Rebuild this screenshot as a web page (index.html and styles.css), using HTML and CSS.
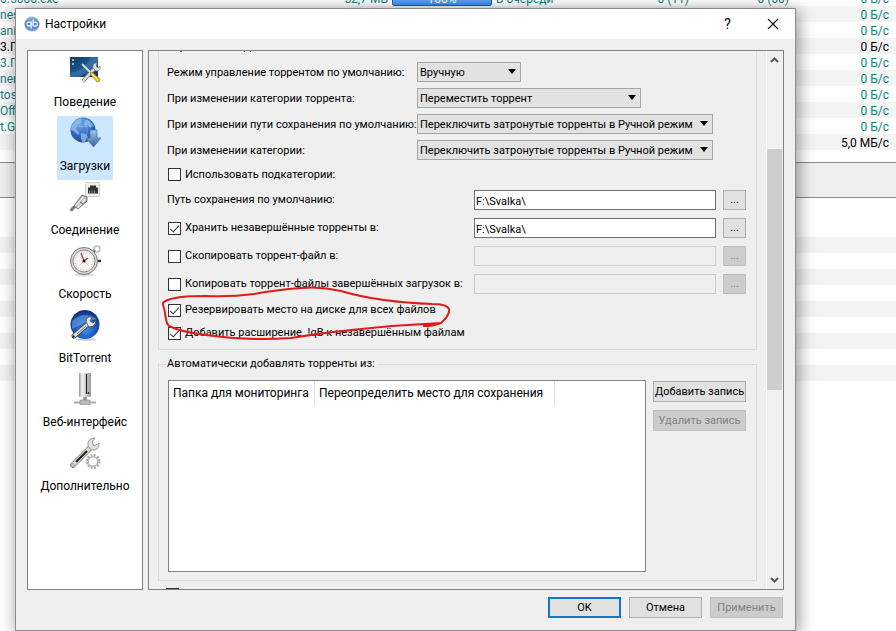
FILE: index.html
```html
<!DOCTYPE html>
<html lang="ru">
<head>
<meta charset="utf-8">
<title>Настройки</title>
<link rel="stylesheet" href="styles.css">
</head>
<body>
<main class="desktop">
  <section class="app" aria-label="Список торрентов">
    <table class="torrents">
      <colgroup><col class="c-name"><col class="c-size"><col class="c-done"><col class="c-state"><col class="c-num"><col class="c-num"><col></colgroup>
      <tbody>
        <tr><td>0.5000.exe</td><td class="num size">52,7 МБ</td><td><div class="bar">100%</div></td><td>В очереди</td><td class="num">0 (11)</td><td class="num">0 (60)</td><td class="num">0 Б/с</td></tr>
        <tr><td colspan="6">nes</td><td class="num">0 Б/с</td></tr>
        <tr><td colspan="6">ani</td><td class="num">0 Б/с</td></tr>
        <tr class="active"><td colspan="6">3.П</td><td class="num">0 Б/с</td></tr>
        <tr><td colspan="6">3.П</td><td class="num">0 Б/с</td></tr>
        <tr><td colspan="6">nem</td><td class="num">0 Б/с</td></tr>
        <tr><td colspan="6">tos</td><td class="num">0 Б/с</td></tr>
        <tr><td colspan="6">Offi</td><td class="num">0 Б/с</td></tr>
        <tr><td colspan="6">t.G.</td><td class="num">0 Б/с</td></tr>
        <tr class="active"><td colspan="6"></td><td class="num">5,0 МБ/с</td></tr>
      </tbody>
    </table>
    <div class="splitter"></div>
    <div class="stripes"></div>
  </section>

  <section class="dialog" role="dialog" aria-labelledby="dlg-title">
    <header class="titlebar">
      <svg class="logo" viewBox="0 0 16 16" aria-hidden="true">
        <defs><linearGradient id="lg" x1="0" y1="0" x2="0" y2="1"><stop offset="0" stop-color="#9db9dd"/><stop offset=".5" stop-color="#4a78bd"/><stop offset="1" stop-color="#7da4dc"/></linearGradient></defs>
        <circle cx="8" cy="8" r="7.5" fill="url(#lg)"/>
        <g fill="none" stroke="#e8f1fc" stroke-width="1.3"><circle cx="5" cy="8" r="2"/><path d="M7.2 5.5v7M9.2 3.5v6.7"/><circle cx="11.2" cy="8.2" r="2"/></g>
      </svg>
      <h1 id="dlg-title">Настройки</h1>
      <button class="tb" type="button" aria-label="Справка">?</button>
      <button class="tb" type="button" aria-label="Закрыть"><svg viewBox="0 0 12 12" width="12" height="12"><path d="M1 1l10 10M11 1L1 11" stroke="#111" stroke-width="1.1"/></svg></button>
    </header>

    <div class="body">
      <nav class="sidebar" aria-label="Разделы">
        <button type="button" class="item">
          <svg viewBox="0 0 32 32"><defs><linearGradient id="scr" x1="0" y1="0" x2="1" y2="1"><stop offset="0" stop-color="#123c63"/><stop offset=".55" stop-color="#1c5790"/><stop offset="1" stop-color="#0e2f57"/></linearGradient></defs>
          <rect x="1" y="4" width="28" height="20" fill="url(#scr)"/><path d="M1 20Q15 18 22 4h7v8Q20 20 9 24H1z" fill="#4d8fc4" opacity=".4"/><path d="M3 7h2M3 11h2" stroke="#b9dcf5" stroke-width="1.5"/>
          <path d="M14 28L27 14" stroke="#777" stroke-width="4"/><path d="M14 28L27 14" stroke="#ddd" stroke-width="2.4"/><path d="M24 15q-1-5 4-5l-1 3 2 2 2-2q1 5-4 5z" fill="#ddd" stroke="#777" stroke-width=".7"/>
          <path d="M13 11l10 10" stroke="#ddd" stroke-width="1.8"/><path d="M21 19l3 1 7 6q0 3-3 3l-6-7z" fill="#efc52a" stroke="#9d7a13" stroke-width=".7"/><path d="M23 21l6 6" stroke="#fff0a0"/></svg>
          <span>Поведение</span></button>
        <button type="button" class="item selected" aria-current="true">
          <svg viewBox="0 0 32 32"><defs><radialGradient id="globe" cx=".4" cy=".3" r=".75"><stop offset="0" stop-color="#6fa9e8"/><stop offset=".6" stop-color="#2e68bd"/><stop offset="1" stop-color="#1c428d"/></radialGradient><linearGradient id="arr" x2="0" y2="1"><stop offset="0" stop-color="#a6c4e8"/><stop offset="1" stop-color="#2f62a5"/></linearGradient></defs>
          <circle cx="14" cy="13" r="12.500" fill="url(#globe)"/><path d="M5 5Q9 1 13 2l-1 4-4 2-1 4 3 3-1 3-4-4-3-1q0-5 3-8zM17 2q5 2 7 6l-3 3-2-3-3 1-1-3zM12 16l5 1 2 3-3 5h-3l-1-4z" fill="#a9cdf3" opacity=".65"/><path d="M3 8q10 3 22 1M14 1q8 11 1 24" fill="none" stroke="#8ebaf0" stroke-width=".6"/>
          <path d="M21 13h7v8h4L24.500 30 17 21h4z" fill="url(#arr)" stroke="#4c78b1" stroke-width=".8"/></svg>
          <span>Загрузки</span></button>
        <button type="button" class="item">
          <svg viewBox="0 0 32 32"><rect x="16.500" y="1.500" width="14" height="14" rx="1" fill="#eee" stroke="#ccc"/><path d="M19 12.500V6.500h2V4.500h6v2h2v6z" fill="#333"/><path d="M20.500 12.500v-3M23 12.500v-3M25.500 12.500v-3" stroke="#aaa" stroke-width=".8"/><path d="M7 25q-4 2-5 5" stroke="#777" stroke-width="3" fill="none"/><path d="M5 25L13 14l5 2v4L9 28z" fill="#b7b7b7" stroke="#777"/><path d="M6.500 25l8-9M8.500 27l8-9" stroke="#f2f2f2" stroke-width="1.4"/><path d="M11 21l3 2" stroke="#555"/></svg>
          <span>Соединение</span></button>
        <button type="button" class="item">
          <svg viewBox="0 0 32 32"><ellipse cx="16" cy="30" rx="11" ry="1.500" fill="#ddd"/><circle cx="28" cy="4" r="3" fill="none" stroke="#bbb" stroke-width="1.400"/><path d="M24 7l2-2" stroke="#888" stroke-width="3"/><path d="M29 16h3" stroke="#333" stroke-width="2.500"/><circle cx="15" cy="16" r="13.500" fill="#d9d9d9" stroke="#777"/><circle cx="15" cy="16" r="11" fill="#f8f5f4" stroke="#888"/><circle cx="15" cy="16" r="9" fill="none" stroke="#aaa" stroke-dasharray=".8 2"/><path d="M15 16L12 8M15 16l4-3" stroke="#a33" stroke-width="1.200"/><path d="M15 16l-5 5M15 16l5 5" stroke="#ecc" stroke-width="1"/><circle cx="15" cy="16" r="1.500" fill="#400"/></svg>
          <span>Скорость</span></button>
        <button type="button" class="item">
          <svg viewBox="0 0 32 32"><defs><radialGradient id="bt" cx=".5" cy=".65" r=".6"><stop offset="0" stop-color="#449bea"/><stop offset=".6" stop-color="#1b57bd"/><stop offset="1" stop-color="#123581"/></radialGradient></defs><ellipse cx="17" cy="30.500" rx="10" ry="1.300" fill="#ccd"/><circle cx="16" cy="15.500" r="14.500" fill="url(#bt)"/><path d="M3 12Q14 1 28 10 18 12 3 20z" fill="#7fb0ee" opacity=".5"/><path d="M5 27L20 14" stroke="#444" stroke-width="5" stroke-linecap="round"/><path d="M5 27L20 14" stroke="#ddd" stroke-width="3.400" stroke-linecap="round"/><path d="M8 25L17 17" stroke="#777" stroke-width="1"/><path d="M17 13q0-6 6-5l-2 4 3 2 3-3q0 7-7 7z" fill="#e5e5e5" stroke="#444" stroke-width=".8"/><circle cx="4.500" cy="27.500" r="1.200" fill="#333"/></svg>
          <span>BitTorrent</span></button>
        <button type="button" class="item">
          <svg viewBox="0 0 32 32"><defs><linearGradient id="srv"><stop offset="0" stop-color="#999"/><stop offset=".25" stop-color="#f2f2f2"/><stop offset=".55" stop-color="#d5d5d5"/><stop offset="1" stop-color="#999"/></linearGradient></defs><rect x="10" width="12" height="24" fill="url(#srv)"/><path d="M17.500 1v20" stroke="#222" stroke-width="1.200"/><circle cx="19.500" cy="20" r="1" fill="#333"/><path d="M14 24h4v3h-4z" fill="#999"/><path d="M5 29.500h22" stroke="#aaa" stroke-width="2"/><rect x="11" y="27" width="10" height="5" fill="#bbb" stroke="#888" stroke-width=".6"/></svg>
          <span>Веб-интерфейс</span></button>
        <button type="button" class="item">
          <svg viewBox="0 0 32 32"><circle cx="24" cy="24.500" r="6" fill="none" stroke="#abaebb" stroke-width="3" stroke-dasharray="1.900 1.240"/><circle cx="24" cy="24.500" r="4.800" fill="#fff" stroke="#b5b8c4" stroke-width="1.500"/><path d="M4 28L22 10" stroke="#777" stroke-width="5.500" stroke-linecap="round"/><path d="M4 28L22 10" stroke="#ddd" stroke-width="4" stroke-linecap="round"/><path d="M7 25L18 14" stroke="#222" stroke-width="2.200"/><path d="M19 9q-1-8 7-8l-3 4 2 4 5-3q1 8-8 7z" fill="#e0e0e0" stroke="#888" stroke-width=".8"/><circle cx="4" cy="28" r="1.300" fill="#fff" stroke="#555" stroke-width=".6"/></svg>
          <span>Дополнительно</span></button>
      </nav>

      <div class="panel">
        <form class="view">
          <div class="group first">
            <div class="heading">Управление торрентами</div>
            <div class="row"><label class="lab" for="s1">Режим управление торрентом по умолчанию:</label><span class="combo w1"><select id="s1"><option>Вручную</option></select></span></div>
            <div class="row"><label class="lab" for="s2">При изменении категории торрента:</label><span class="combo w2"><select id="s2"><option>Переместить торрент</option></select></span></div>
            <div class="row"><label class="lab" for="s3">При изменении пути сохранения по умолчанию:</label><span class="combo w3"><select id="s3"><option>Переключить затронутые торренты в Ручной режим</option></select></span></div>
            <div class="row"><label class="lab" for="s4">При изменении категории:</label><span class="combo w3"><select id="s4"><option>Переключить затронутые торренты в Ручной режим</option></select></span></div>
            <label class="check sub"><input type="checkbox">Использовать подкатегории:</label>
            <div class="path"><label for="p1">Путь сохранения по умолчанию:</label><input class="text" id="p1" type="text" value="F:\Svalka\"><button type="button" class="btn" aria-label="Обзор">...</button></div>
            <div class="path"><label class="check"><input type="checkbox" checked>Хранить незавершённые торренты в:</label><input class="text" type="text" value="F:\Svalka\" aria-label="Папка незавершённых торрентов"><button type="button" class="btn" aria-label="Обзор">...</button></div>
            <div class="path"><label class="check"><input type="checkbox">Скопировать торрент-файл в:</label><input class="text" type="text" disabled aria-label="Папка торрент-файлов"><button type="button" class="btn" disabled aria-label="Обзор">...</button></div>
            <div class="path"><label class="check"><input type="checkbox">Копировать торрент-файлы завершённых загрузок в:</label><input class="text" type="text" disabled aria-label="Папка файлов завершённых загрузок"><button type="button" class="btn" disabled aria-label="Обзор">...</button></div>
            <label class="check solo"><input type="checkbox" checked>Резервировать место на диске для всех файлов</label>
            <label class="check solo"><input type="checkbox" checked>Добавить расширение .!qB к незавершённым файлам</label>
          </div>
          <fieldset class="group watch">
            <legend>Автоматически добавлять торренты из:</legend>
            <div class="watch-row">
              <div class="list">
                <table><thead><tr><th class="f1">Папка для мониторинга</th><th class="f2">Переопределить место для сохранения</th><td></td></tr></thead></table>
              </div>
              <div class="side">
                <button type="button" class="btn">Добавить запись</button>
                <button type="button" class="btn" disabled>Удалить запись</button>
              </div>
            </div>
          </fieldset>
          <div class="next"><input type="checkbox" aria-label="Уведомление по почте"></div>
        </form>
        <div class="scroll" aria-hidden="true">
          <svg viewBox="0 0 9 6"><path d="M1 5l3.500-3.500L8 5" /></svg>
          <div class="track"><div class="thumb"></div></div>
          <svg viewBox="0 0 9 6"><path d="M1 1l3.500 3.500L8 1" /></svg>
        </div>
      </div>
    </div>

    <footer class="actions">
      <button type="button" class="btn default">OK</button>
      <button type="button" class="btn">Отмена</button>
      <button type="button" class="btn" disabled>Применить</button>
    </footer>

    <svg class="marker" viewBox="0 0 300 60" aria-hidden="true"><path d="M278 41Q288 41 295 38Q304 30 303 24Q301 19 286 19Q260 18 238 15Q215 12 195 6Q175 1 155 3Q130 5 108 9Q85 12 60 11Q45 11 35 12Q15 15 17 20C21 30 18 36 23 41Q35 47 60 50Q100 56 145 53Q175 48 205 45Q250 40 295 38"/></svg>
  </section>
</main>
</body>
</html>
```
FILE: styles.css
```css
* { box-sizing: border-box; }
body { margin: 0; background: #fff; color: #000; font: 12px/16px Roboto, "Noto Sans", sans-serif; }
button, input, select { font: inherit; color: inherit; margin: 0; }
button { padding: 0; border: 0; background: none; }

.desktop { position: relative; min-height: 100vh; overflow: hidden; }
.app { color: #138080; }
.torrents { width: 100%; margin-top: -10px; border-spacing: 0; table-layout: fixed; }
.torrents td { height: 16px; padding: 2px 0 0; white-space: nowrap; line-height: 14px; }
.torrents tr:nth-child(even) { background: #f4f4f4; }
.torrents .active { color: #000; }
.torrents .num { text-align: right; padding-right: 7px; }
.torrents .size { padding-right: 4px; }
.c-name { width: 292px; }
.c-size { width: 100px; }
.c-done { width: 100px; }
.c-state { width: 104px; }
.c-num { width: 100px; }
.torrents td:nth-child(4) { padding-left: 4px; }
.bar { height: 14px; border: 1px solid #1f5fae; border-radius: 2px; background: linear-gradient(#8bbcf5, #3c8ff0); color: #fff; text-align: center; line-height: 12px; }
.splitter { height: 36px; margin-top: 12px; border: solid #8a8a8a; border-width: 1px 0; background: #efefef; }
.stripes { height: 144px; margin-top: 39px; background: repeating-linear-gradient(#f3f3f3 0 16px, #fff 16px 32px); }

.dialog { position: absolute; inset: 8px 100px 0 15px; display: flex; flex-direction: column; border: 1px solid #8c8c8c; background: #efefef; box-shadow: 2px 3px 16px rgba(0, 0, 0, .45); font-size: 11px; line-height: 14px; }
.titlebar { display: flex; align-items: center; height: 30px; padding-left: 8px; background: #fff; font-size: 12px; line-height: 16px; }
.titlebar h1 { flex: 1; margin: 0 0 0 5px; font: inherit; }
.logo { width: 16px; height: 16px; }
.tb { width: 45px; height: 30px; font-size: 14px; }
.tb svg { display: block; margin: auto; }

.body { flex: 1; display: flex; gap: 5px; min-height: 0; padding: 11px 11px 7px; }
.sidebar { display: flex; flex-direction: column; align-items: center; width: 116px; padding-top: 1px; border: 1px solid #828282; background: #fff; }
.item { display: flex; flex-direction: column; align-items: center; gap: 9px; height: 64px; padding: 1px 3px 6px; font-size: 12px; line-height: 16px; white-space: nowrap; }
.item svg { width: 32px; height: 32px; }
.selected { background: #cce8ff; }

.panel { flex: 1; display: flex; min-width: 0; border: 1px solid #828282; }
.view { flex: 1; min-width: 0; padding: 0 9px; overflow: hidden; }
.group { margin: 0; padding: 0 10px 0 8px; border: 1px solid #dadada; }
.first { display: flow-root; height: 299px; border-top: 0; }
.heading { height: 11px; margin: -11px 0 11px; line-height: 14px; }
.row { display: flex; align-items: center; margin-bottom: 6px; }
.lab { width: 250px; padding-top: 2px; white-space: nowrap; }
.combo { position: relative; display: block; }
.combo::after { content: ""; position: absolute; right: 5px; top: 7px; border: solid transparent; border-width: 5px 4px 0; border-top-color: #000; pointer-events: none; }
.combo select { appearance: none; display: block; width: 100%; height: 20px; padding: 2px 2px 0; border: 1px solid #a6a6a6; border-radius: 0; background: #e2e2e2; }
.w1 { width: 104px; }
.w2 { width: 224px; }
.w3 { width: 296px; }

.check { display: flex; align-items: center; gap: 4px; white-space: nowrap; }
input[type="checkbox"] { appearance: none; flex: none; position: relative; width: 13px; height: 13px; margin-left: 1px; border: 1px solid #333; background: #fff; }
input[type="checkbox"]:checked::after { content: ""; position: absolute; left: 3px; top: 0; width: 4px; height: 8px; border: solid #333; border-width: 0 1px 1px 0; transform: rotate(42deg); }
.sub { height: 13px; margin: 8px 0 9px; }
.path { display: flex; align-items: center; height: 20px; margin-bottom: 8px; }
.path > label { flex: 1; white-space: nowrap; }
.text { width: 242px; height: 20px; margin-right: 7px; padding: 2px 1px 0; border: 1px solid #6e6e6e; background: #fff; }
.text:disabled { border-color: #ccc; background: #efefef; }
.btn { height: 21px; border: 1px solid #adadad; background: #e1e1e1; text-align: center; white-space: nowrap; }
.btn:disabled { border-color: #bfbfbf; background: #ccc; color: #838383; }
.path .btn { width: 23px; height: 20px; }
.solo { height: 16px; margin-bottom: 7px; }

.watch { margin-top: 7px; padding: 0 10px 8px 9px; min-width: 0; }
.watch legend { margin-left: -3px; padding: 0 2px; }
.watch-row { display: flex; gap: 7px; margin-top: 9px; }
.list { flex: 1; height: 192px; border: 1px solid #828282; background: #fff; }
.list table { width: 100%; border-spacing: 0; table-layout: fixed; font-size: 12px; line-height: 16px; }
.list th { height: 23px; padding: 0 4px; border-right: 1px solid #e0e0e0; font-weight: 400; text-align: left; white-space: nowrap; }
.f1 { width: 146px; }
.f2 { width: 240px; }
.side { display: flex; flex-direction: column; gap: 8px; width: 93px; padding-top: 1px; }
.next { height: 20px; margin: 7px 0 0 7px; }
.next input { display: block; }

.scroll { display: flex; flex-direction: column; align-items: center; width: 17px; padding: 6px 1px 6px 0; border-left: 1px solid #fff; background: #f0f0f0; }
.scroll svg { width: 9px; height: 6px; fill: none; stroke: #555; stroke-width: 2; }
.track { flex: 1; width: 15px; padding-top: 86px; }
.thumb { height: 241px; background: #cdcdcd; }

.actions { display: flex; justify-content: flex-end; gap: 8px; padding: 0 12px 12px; }
.actions .btn { width: 73px; }
.actions .default { border: 2px solid #0f78c8; }
.marker { position: absolute; left: 130px; top: 276px; width: 300px; height: 60px; overflow: visible; fill: none; stroke: #e01b1b; stroke-width: 2; stroke-linecap: round; pointer-events: none; }
```
